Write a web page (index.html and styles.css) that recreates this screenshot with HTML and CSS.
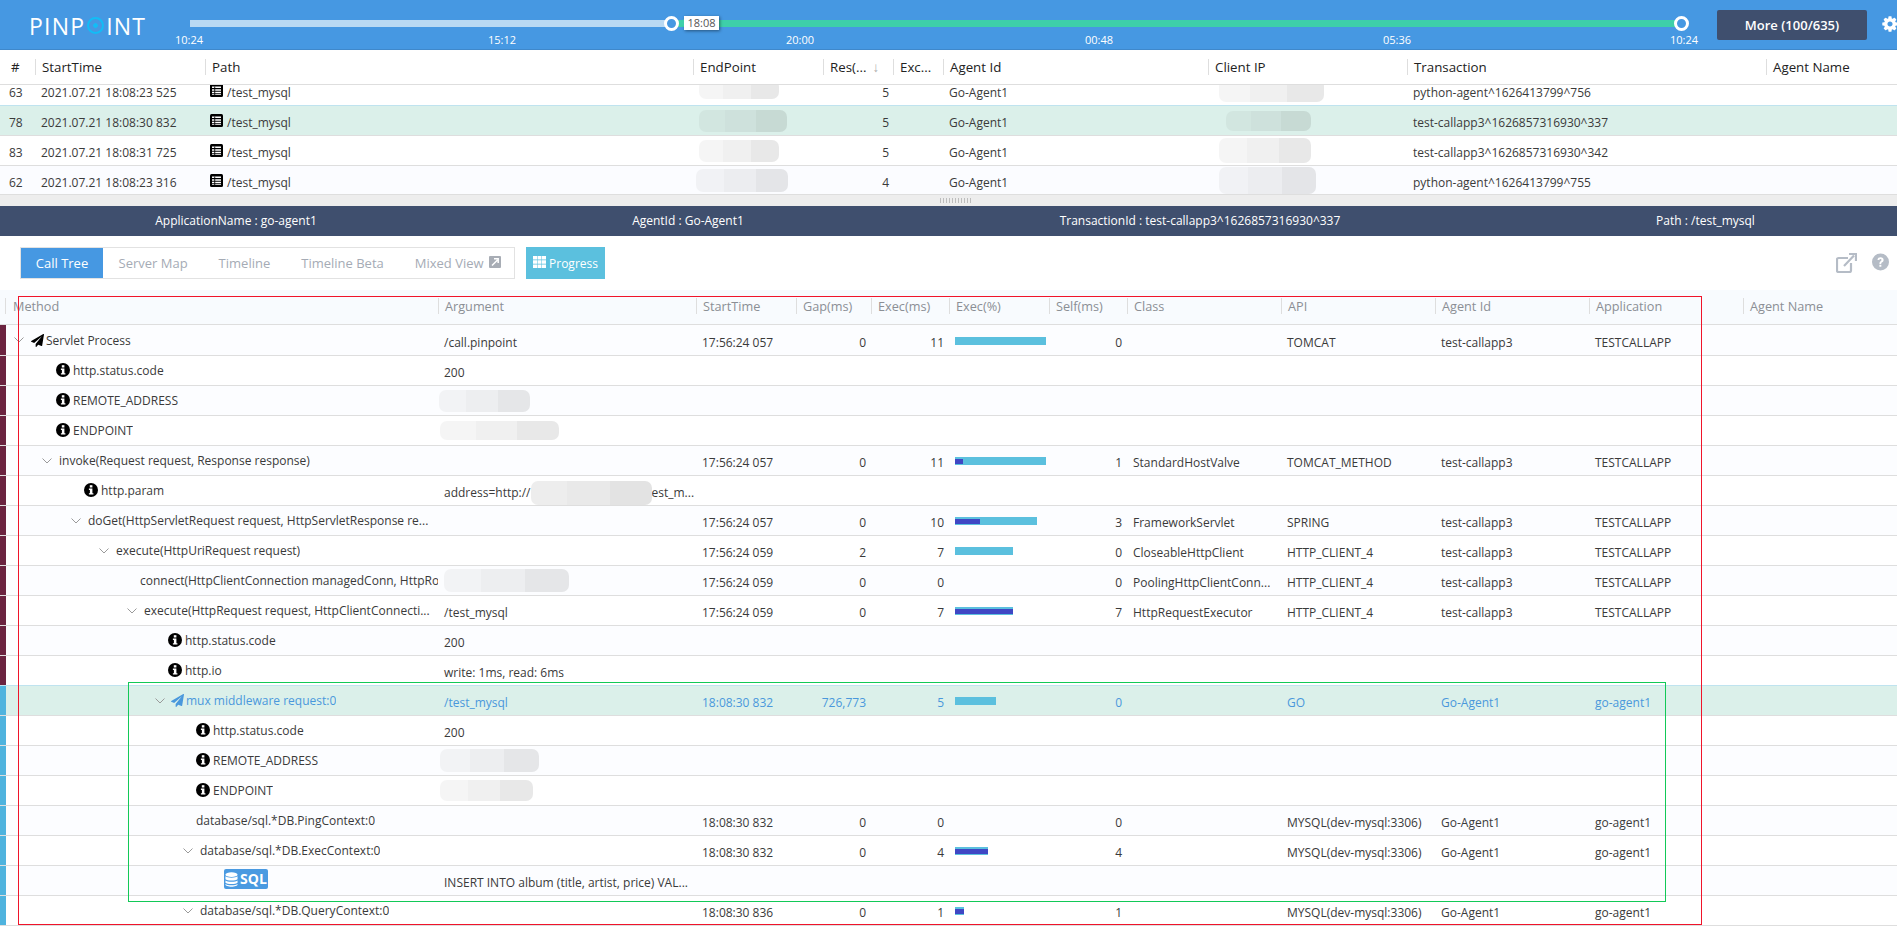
FILE: index.html
```html
<!DOCTYPE html>
<html lang="en">
<head>
<meta charset="utf-8">
<title>Pinpoint transaction list</title>
<link rel="stylesheet" href="styles.css">
</head>
<body>
<svg class="sprite" xmlns="http://www.w3.org/2000/svg">
  <symbol id="i-plane" viewBox="0 0 1792 1792"><path d="M1764 11q33 24 27 64l-256 1536q-5 29-32 45-14 8-31 8-11 0-24-5l-453-185-242 295q-18 23-49 23-13 0-22-4-19-7-30.5-23.5t-11.5-36.5v-349l864-1059-1069 925-395-162q-37-14-40-55-2-40 32-59l1664-960q15-9 32-9 20 0 36 11z"/></symbol>
  <symbol id="i-gear" viewBox="0 0 1792 1792"><path d="M1152 896q0-106-75-181t-181-75-181 75-75 181 75 181 181 75 181-75 75-181zm512-109v222q0 12-8 23t-20 13l-185 28q-19 54-39 91 35 50 107 138 10 12 10 25t-9 23q-27 37-99 108t-94 71q-12 0-26-9l-138-108q-44 23-91 38-16 136-29 186-7 28-36 28h-222q-14 0-24.5-8.5t-11.5-21.5l-28-184q-49-16-90-37l-141 107q-10 9-25 9-14 0-25-11-126-114-165-168-7-10-7-23 0-12 8-23 15-21 51-66.5t54-70.5q-27-50-41-99l-183-27q-13-2-21-12.5t-8-23.5v-222q0-12 8-23t19-13l186-28q14-46 39-92-40-57-107-138-10-12-10-24 0-10 9-23 26-36 98.5-107.5t94.5-71.5q13 0 26 10l138 107q44-23 91-38 16-136 29-186 7-28 36-28h222q14 0 24.5 8.5t11.5 21.5l28 184q49 16 90 37l142-107q9-9 24-9 13 0 25 10 129 119 165 170 7 8 7 22 0 12-8 23-15 21-51 66.5t-54 70.5q26 50 41 98l183 28q13 2 21 12.5t8 23.5z"/></symbol>
  <symbol id="i-info" viewBox="0 0 14 14"><circle cx="7" cy="7" r="7"/><rect x="5.8" y="2.2" width="2.6" height="2.3" fill="#fff"/><path d="M4.9 5.6h3.5v4.6h1v1.4H4.9v-1.4h1V7H4.9z" fill="#fff"/></symbol>
  <symbol id="i-chev" viewBox="0 0 10 6"><path d="M.5.5 5 5 9.500.5" fill="none" stroke="#9a9a9a" stroke-width="1"/></symbol>
  <symbol id="i-list" viewBox="0 0 13 13"><rect width="13" height="13" rx="1.500"/><path d="M2 2.500h9v1.600H2zM2 5.200h9v1.500H2zM2 7.800h9v1.500H2zM2 10.300h9v.7H2z" fill="#fff"/><path d="M4.300 2.500h.9v8.500h-.9z"/></symbol>
  <symbol id="i-grid" viewBox="0 0 13 12"><path d="M0 0h4v3.500H0zM4.500 0h4v3.500h-4zM9 0h4v3.500H9zM0 4.200h4v3.500H0zM4.500 4.200h4v3.500h-4zM9 4.200h4v3.500H9zM0 8.400h4V12H0zM4.500 8.400h4V12h-4zM9 8.400h4V12H9z"/></symbol>
  <symbol id="i-ext" viewBox="0 0 12 12"><rect width="12" height="12" rx="1"/><path d="M3 9.500 8.500 4M5 2.800h4.200V7" fill="none" stroke="#fff" stroke-width="1.500"/></symbol>
  <symbol id="i-share" viewBox="0 0 21 20"><path d="M12 5H2.500A1.500 1.500 0 0 0 1 6.500v11A1.500 1.500 0 0 0 2.500 19h11a1.500 1.500 0 0 0 1.500-1.500V10" fill="none" stroke="currentColor" stroke-width="2.200"/><path d="M8 13 18 2.500M13 1h7v7" fill="none" stroke="currentColor" stroke-width="2.200"/></symbol>
  <symbol id="i-help" viewBox="0 0 18 18"><circle cx="9" cy="9" r="9"/><path d="M5.800 6.800C6 4.800 7.300 4 9.100 4c1.900 0 3.200 1.100 3.200 2.800 0 1.300-.7 1.900-1.500 2.500-.8.500-1 .8-1 1.700H7.900c0-1.500.3-2.100 1.200-2.800.7-.5 1-.8 1-1.300 0-.6-.4-1-1.100-1-.8 0-1.100.4-1.200 1.100zM7.800 12h2.100v2.100H7.800z" fill="#fff"/></symbol>
  <symbol id="i-db" viewBox="0 0 14 16"><ellipse cx="7" cy="2.800" rx="6.500" ry="2.500"/><path d="M.5 4.600C2 6.500 12 6.500 13.500 4.600v3C12 9.500 2 9.500.5 7.600zM.5 9C2 10.900 12 10.900 13.500 9v2.500C12 13.400 2 13.400.5 11.500zM.5 12.800c1.500 1.900 11.500 1.900 13 0v.6c0 1.400-3 2.400-6.500 2.400S.5 14.800.5 13.400z"/></symbol>
</svg>

<header class="topbar">
  <div class="logo">PINP<span class="logo-o"></span>INT</div>
  <div class="timeline">
    <div class="track">
      <div class="track-done"></div>
      <div class="track-live"></div>
      <span class="handle handle-a"></span>
      <span class="handle handle-b"></span>
      <span class="tip">18:08</span>
    </div>
    <div class="ticks">
      <span class="tick">10:24</span><span class="tick">15:12</span><span class="tick">20:00</span><span class="tick">00:48</span><span class="tick">05:36</span><span class="tick">10:24</span>
    </div>
  </div>
  <button class="more">More (100/635)</button>
  <svg class="gear"><use href="#i-gear"/></svg>
</header>

<section class="list">
  <div class="list-row list-head">
    <div class="th first">#</div><div class="th">StartTime</div><div class="th">Path</div><div class="th">EndPoint</div>
    <div class="th">Res(...<span class="sort">↓</span></div><div class="th">Exc...</div><div class="th">Agent Id</div><div class="th">Client IP</div><div class="th">Transaction</div><div class="th">Agent Name</div>
  </div>
  <div class="list-body">
    <div class="list-scroll">
      <div class="list-row">
        <div class="lc idx">63</div><div class="lc">2021.07.21 18:08:23 525</div><div class="lc path"><svg class="ic-list"><use href="#i-list"/></svg>/test_mysql</div><div class="lc"><span class="blob w-80 h-19 up2"></span></div>
        <div class="lc num">5</div><div class="lc"></div><div class="lc">Go-Agent1</div><div class="lc"><span class="blob w-105 h-23 ml-5"></span></div><div class="lc">python-agent^1626413799^756</div><div class="lc"></div>
      </div>
      <div class="list-row sel">
        <div class="lc idx">78</div><div class="lc">2021.07.21 18:08:30 832</div><div class="lc path"><svg class="ic-list"><use href="#i-list"/></svg>/test_mysql</div><div class="lc"><span class="blob w-88 h-22"></span></div>
        <div class="lc num">5</div><div class="lc"></div><div class="lc">Go-Agent1</div><div class="lc"><span class="blob w-85 h-20 ml-12"></span></div><div class="lc">test-callapp3^1626857316930^337</div><div class="lc"></div>
      </div>
      <div class="list-row">
        <div class="lc idx">83</div><div class="lc">2021.07.21 18:08:31 725</div><div class="lc path"><svg class="ic-list"><use href="#i-list"/></svg>/test_mysql</div><div class="lc"><span class="blob w-80 h-22"></span></div>
        <div class="lc num">5</div><div class="lc"></div><div class="lc">Go-Agent1</div><div class="lc"><span class="blob w-92 h-25 ml-5"></span></div><div class="lc">test-callapp3^1626857316930^342</div><div class="lc"></div>
      </div>
      <div class="list-row alt">
        <div class="lc idx">62</div><div class="lc">2021.07.21 18:08:23 316</div><div class="lc path"><svg class="ic-list"><use href="#i-list"/></svg>/test_mysql</div><div class="lc"><span class="blob w-92 h-23 ml-n3"></span></div>
        <div class="lc num">4</div><div class="lc"></div><div class="lc">Go-Agent1</div><div class="lc"><span class="blob w-97 h-27 ml-5"></span></div><div class="lc">python-agent^1626413799^755</div><div class="lc"></div>
      </div>
    </div>
  </div>
</section>

<div class="splitter"><span class="grip"></span></div>

<div class="summary">
  <span>ApplicationName : go-agent1</span><span>AgentId : Go-Agent1</span><span>TransactionId : test-callapp3^1626857316930^337</span><span class="summary-path">Path : /test_mysql</span>
</div>

<div class="toolbar">
  <nav class="tabs">
    <a class="tab active">Call Tree</a><a class="tab">Server Map</a><a class="tab">Timeline</a><a class="tab">Timeline Beta</a><a class="tab">Mixed View<svg class="ic-ext"><use href="#i-ext"/></svg></a>
  </nav>
  <button class="progress"><svg class="ic-grid"><use href="#i-grid"/></svg>Progress</button>
  <div class="tools">
    <svg class="ic-share"><use href="#i-share"/></svg>
    <svg class="ic-help"><use href="#i-help"/></svg>
  </div>
</div>

<section class="tree">
  <div class="tr tree-head">
    <div></div><div class="th method">Method</div><div class="th">Argument</div><div class="th">StartTime</div><div class="th">Gap(ms)</div><div class="th">Exec(ms)</div><div class="th">Exec(%)</div><div class="th">Self(ms)</div><div class="th">Class</div><div class="th">API</div><div class="th">Agent Id</div><div class="th">Application</div><div class="th">Agent Name</div>
  </div>

  <div class="tr tall server">
    <i class="strip"></i><div class="m d0"><svg class="chev"><use href="#i-chev"/></svg><svg class="plane"><use href="#i-plane"/></svg><span class="mt">Servlet Process</span></div>
    <div class="td">/call.pinpoint</div><div class="td">17:56:24 057</div><div class="td num">0</div><div class="td num">11</div>
    <div class="td bar-cell"><div class="bar" style="width:91px"></div></div><div class="td num">0</div><div class="td"></div><div class="td">TOMCAT</div><div class="td">test-callapp3</div><div class="td">TESTCALLAPP</div><div></div>
  </div>
  <div class="tr server">
    <i class="strip"></i><div class="m a1"><svg class="info"><use href="#i-info"/></svg><span class="mt">http.status.code</span></div>
    <div class="td">200</div><div class="rest"></div>
  </div>
  <div class="tr server">
    <i class="strip"></i><div class="m a1"><svg class="info"><use href="#i-info"/></svg><span class="mt">REMOTE_ADDRESS</span></div>
    <div class="td"><span class="blob w-91 h-22 ml-n5"></span></div><div class="rest"></div>
  </div>
  <div class="tr server">
    <i class="strip"></i><div class="m a1"><svg class="info"><use href="#i-info"/></svg><span class="mt">ENDPOINT</span></div>
    <div class="td"><span class="blob w-119 h-19 ml-n4"></span></div><div class="rest"></div>
  </div>
  <div class="tr server">
    <i class="strip"></i><div class="m d1"><svg class="chev"><use href="#i-chev"/></svg><span class="mt">invoke(Request request, Response response)</span></div>
    <div class="td"></div><div class="td">17:56:24 057</div><div class="td num">0</div><div class="td num">11</div>
    <div class="td bar-cell"><div class="bar" style="width:91px"><div class="self" style="width:8px"></div></div></div><div class="td num">1</div><div class="td">StandardHostValve</div><div class="td">TOMCAT_METHOD</div><div class="td">test-callapp3</div><div class="td">TESTCALLAPP</div><div></div>
  </div>
  <div class="tr server">
    <i class="strip"></i><div class="m a3"><svg class="info"><use href="#i-info"/></svg><span class="mt">http.param</span></div>
    <div class="td"><span>address=http://</span><span class="blob inline-blob"></span><span>est_m...</span></div><div class="rest"></div>
  </div>
  <div class="tr server">
    <i class="strip"></i><div class="m d2"><svg class="chev"><use href="#i-chev"/></svg><span class="mt">doGet(HttpServletRequest request, HttpServletResponse re...</span></div>
    <div class="td"></div><div class="td">17:56:24 057</div><div class="td num">0</div><div class="td num">10</div>
    <div class="td bar-cell"><div class="bar" style="width:82px"><div class="self" style="width:25px"></div></div></div><div class="td num">3</div><div class="td">FrameworkServlet</div><div class="td">SPRING</div><div class="td">test-callapp3</div><div class="td">TESTCALLAPP</div><div></div>
  </div>
  <div class="tr server">
    <i class="strip"></i><div class="m d3"><svg class="chev"><use href="#i-chev"/></svg><span class="mt">execute(HttpUriRequest request)</span></div>
    <div class="td"></div><div class="td">17:56:24 059</div><div class="td num">2</div><div class="td num">7</div>
    <div class="td bar-cell"><div class="bar" style="width:58px"></div></div><div class="td num">0</div><div class="td">CloseableHttpClient</div><div class="td">HTTP_CLIENT_4</div><div class="td">test-callapp3</div><div class="td">TESTCALLAPP</div><div></div>
  </div>
  <div class="tr server">
    <i class="strip"></i><div class="m leaf4"><span class="mt clip">connect(HttpClientConnection managedConn, HttpRo</span></div>
    <div class="td"><span class="blob w-125 h-23"></span></div><div class="td">17:56:24 059</div><div class="td num">0</div><div class="td num">0</div>
    <div class="td bar-cell"></div><div class="td num">0</div><div class="td"><span class="ell">PoolingHttpClientConn...</span></div><div class="td">HTTP_CLIENT_4</div><div class="td">test-callapp3</div><div class="td">TESTCALLAPP</div><div></div>
  </div>
  <div class="tr server">
    <i class="strip"></i><div class="m d4"><svg class="chev"><use href="#i-chev"/></svg><span class="mt">execute(HttpRequest request, HttpClientConnecti...</span></div>
    <div class="td">/test_mysql</div><div class="td">17:56:24 059</div><div class="td num">0</div><div class="td num">7</div>
    <div class="td bar-cell"><div class="bar" style="width:58px"><div class="self" style="width:58px"></div></div></div><div class="td num">7</div><div class="td">HttpRequestExecutor</div><div class="td">HTTP_CLIENT_4</div><div class="td">test-callapp3</div><div class="td">TESTCALLAPP</div><div></div>
  </div>
  <div class="tr server">
    <i class="strip"></i><div class="m a5"><svg class="info"><use href="#i-info"/></svg><span class="mt">http.status.code</span></div>
    <div class="td">200</div><div class="rest"></div>
  </div>
  <div class="tr server">
    <i class="strip"></i><div class="m a5"><svg class="info"><use href="#i-info"/></svg><span class="mt">http.io</span></div>
    <div class="td">write: 1ms, read: 6ms</div><div class="rest"></div>
  </div>

  <div class="tr agent sel">
    <i class="strip"></i><div class="m d5"><svg class="chev"><use href="#i-chev"/></svg><svg class="plane"><use href="#i-plane"/></svg><span class="mt">mux middleware request:0</span></div>
    <div class="td">/test_mysql</div><div class="td">18:08:30 832</div><div class="td num">726,773</div><div class="td num">5</div>
    <div class="td bar-cell"><div class="bar" style="width:41px"></div></div><div class="td num">0</div><div class="td"></div><div class="td">GO</div><div class="td">Go-Agent1</div><div class="td">go-agent1</div><div></div>
  </div>
  <div class="tr agent">
    <i class="strip"></i><div class="m a6"><svg class="info"><use href="#i-info"/></svg><span class="mt">http.status.code</span></div>
    <div class="td">200</div><div class="rest"></div>
  </div>
  <div class="tr agent">
    <i class="strip"></i><div class="m a6"><svg class="info"><use href="#i-info"/></svg><span class="mt">REMOTE_ADDRESS</span></div>
    <div class="td"><span class="blob w-99 h-23 ml-n4"></span></div><div class="rest"></div>
  </div>
  <div class="tr agent">
    <i class="strip"></i><div class="m a6"><svg class="info"><use href="#i-info"/></svg><span class="mt">ENDPOINT</span></div>
    <div class="td"><span class="blob w-93 h-21 ml-n4"></span></div><div class="rest"></div>
  </div>
  <div class="tr agent">
    <i class="strip"></i><div class="m leaf6"><span class="mt">database/sql.*DB.PingContext:0</span></div>
    <div class="td"></div><div class="td">18:08:30 832</div><div class="td num">0</div><div class="td num">0</div>
    <div class="td bar-cell"></div><div class="td num">0</div><div class="td"></div><div class="td">MYSQL(dev-mysql:3306)</div><div class="td">Go-Agent1</div><div class="td">go-agent1</div><div></div>
  </div>
  <div class="tr agent">
    <i class="strip"></i><div class="m d6"><svg class="chev"><use href="#i-chev"/></svg><span class="mt">database/sql.*DB.ExecContext:0</span></div>
    <div class="td"></div><div class="td">18:08:30 832</div><div class="td num">0</div><div class="td num">4</div>
    <div class="td bar-cell"><div class="bar" style="width:33px"><div class="self" style="width:33px"></div></div></div><div class="td num">4</div><div class="td"></div><div class="td">MYSQL(dev-mysql:3306)</div><div class="td">Go-Agent1</div><div class="td">go-agent1</div><div></div>
  </div>
  <div class="tr agent">
    <i class="strip"></i><div class="m a8"><span class="sql"><svg class="ic-db"><use href="#i-db"/></svg>SQL</span></div>
    <div class="td">INSERT INTO album (title, artist, price) VAL...</div><div class="rest"></div>
  </div>
  <div class="tr agent">
    <i class="strip"></i><div class="m d6"><svg class="chev"><use href="#i-chev"/></svg><span class="mt">database/sql.*DB.QueryContext:0</span></div>
    <div class="td"></div><div class="td">18:08:30 836</div><div class="td num">0</div><div class="td num">1</div>
    <div class="td bar-cell"><div class="bar" style="width:9px"><div class="self" style="width:9px"></div></div></div><div class="td num">1</div><div class="td"></div><div class="td">MYSQL(dev-mysql:3306)</div><div class="td">Go-Agent1</div><div class="td">go-agent1</div><div></div>
  </div>
</section>

<div class="mark mark-red"></div>
<div class="mark mark-green"></div>
</body>
</html>
```
FILE: styles.css
```css
* { box-sizing: border-box; }
html, body { margin: 0; height: 929px; overflow: hidden; }
body {
  position: relative;
  font-family: "Open Sans", "Noto Sans", sans-serif;
  font-size: 12px;
  color: #3a3a3a;
  background: #fff;
}
.sprite { display: none; }

/* top bar */
.topbar {
  height: 50px;
  display: flex;
  background: #4698e2;
  border-bottom: 1px solid #3f88cb;
  overflow: hidden;
}
.logo {
  width: 190px;
  padding: 11px 0 0 29px;
  flex: none;
  font-size: 23px;
  line-height: 26px;
  font-weight: 400;
  letter-spacing: 1.2px;
  color: #fff;
  display: flex;
  height: 40px;
  align-items: center;
}
.logo-o {
  width: 17px;
  height: 17px;
  margin: 0 2px 0 2px;
  border: 2px solid #12bdf6;
  border-radius: 50%;
  background: radial-gradient(circle, #12bdf6 0 2px, transparent 2.500px);
  flex: none;
}
.timeline { width: 1527px; flex: none; }
.track {
  position: relative;
  display: flex;
  width: 1492px;
  height: 7px;
  margin-top: 20px;
}
.track-done { width: 481px; background: #b9d9f3; }
.track-live { flex: 1; background: #3ecfa9; }
.handle {
  position: absolute;
  top: -4px;
  width: 15px;
  height: 15px;
  border: 3px solid #fff;
  border-radius: 50%;
  background: #4698e2;
}
.handle-a { left: 474px; }
.handle-b { left: 1484px; }
.tip {
  position: absolute;
  left: 494px;
  top: -4px;
  width: 35px;
  height: 14px;
  background: #fff;
  color: #555;
  font-size: 11px;
  line-height: 14px;
  text-align: center;
  box-shadow: 1px 1px 3px rgba(0, 0, 0, .45);
}
.tip::before {
  content: "";
  position: absolute;
  left: -4px;
  top: 3px;
  border: 4px solid transparent;
  border-left: 0;
  border-right-color: #3ecfa9;
}
.ticks {
  display: grid;
  grid-template-columns: 313px 298px 299px 298px 287px 40px;
  margin: 6px 0 0 -21px;
}
.tick {
  width: 40px;
  color: #fff;
  font-size: 11px;
  line-height: 13px;
  text-align: center;
}
.more {
  flex: none;
  width: 150px;
  height: 30px;
  margin: 10px 0 0 0;
  border: 0;
  border-radius: 2px;
  background: #3f4f6e;
  color: #fff;
  font: 600 13px "Open Sans", sans-serif;
}
.gear { flex: none; width: 18px; height: 18px; margin: 15px 0 0 14px; fill: #fff; }

/* transaction list */
.list-row {
  display: grid;
  grid-template-columns: 35px 170px 488px 130px 70px 50px 265px 199px 359px 131px;
  height: 30px;
  border-bottom: 1px solid #dedede;
  align-items: center;
  background: #fff;
}
.list-head { height: 35px; }
.list-head .th { color: #222; font-size: 13.300px; }
.th {
  height: 16px;
  padding-left: 6px;
  border-left: 1px solid #dedede;
  font-size: 13px;
  line-height: 16px;
  white-space: nowrap;
  overflow: hidden;
}
.th.first { padding-left: 11px; border-left: 0; }
.sort { margin-left: 6px; color: #aaa; }
.list-body { height: 110px; overflow: hidden; border-bottom: 1px solid #dedede; }
.list-scroll { margin-top: -9px; }
.lc {
  height: 29px;
  padding: 4px 0 0 6px;
  display: flex;
  align-items: center;
  white-space: nowrap;
  min-width: 0;
}
.idx { padding-left: 9px; }
.lc.path { padding-left: 5px; }
.lc.num { justify-content: flex-end; padding-right: 4px; }
.list-row.alt { background: #fbfcff; }
.list-row.sel { background: #dbf0ea; box-shadow: 0 -1px 0 #bfe3ef; }
.ic-list { width: 13px; height: 13px; margin: -4px 4px 0 0; flex: none; }

/* redaction blobs */
.blob {
  display: block;
  flex: none;
  margin-top: -4px;
  border-radius: 7px;
  background: linear-gradient(90deg, rgba(0,0,0,.04) 0 30%, rgba(0,0,0,.06) 30% 65%, rgba(0,0,0,.09) 65% 100%);
  filter: blur(.6px);
}
.inline-blob {
  width: 121px;
  height: 24px;
  margin-top: 0;
  background: linear-gradient(90deg, #ededed 0 30%, #e9e9e9 30% 65%, #e3e3e3 65% 100%);
}
.w-80 { width: 80px; } .w-85 { width: 85px; } .w-88 { width: 88px; } .w-91 { width: 91px; }
.w-92 { width: 92px; } .w-93 { width: 93px; } .w-97 { width: 97px; } .w-99 { width: 99px; }
.w-105 { width: 105px; } .w-119 { width: 119px; } .w-125 { width: 125px; }
.h-19 { height: 19px; } .h-20 { height: 20px; } .h-21 { height: 21px; } .h-22 { height: 22px; }
.h-23 { height: 23px; } .h-25 { height: 25px; } .h-27 { height: 27px; }
.ml-5 { margin-left: 5px; } .ml-12 { margin-left: 12px; } .ml-n3 { margin-left: -3px; }
.ml-n4 { margin-left: -4px; } .ml-n5 { margin-left: -5px; } .up2 { margin-top: -6px; }

/* splitter + summary */
.splitter {
  height: 11px;
  background: #ededed;
  display: flex;
  justify-content: center;
  padding: 3px 0 0 14px;
}
.grip {
  width: 31px;
  height: 5px;
  background: repeating-linear-gradient(90deg, #bdbdbd 0 1px, transparent 1px 3px);
}
.summary {
  height: 30px;
  display: grid;
  grid-template-columns: 472px 432px 592px 401px;
  background: #3f4f6e;
  color: #fff;
  line-height: 30px;
  text-align: center;
}
.summary-path { padding-left: 18px; }

/* toolbar */
.toolbar {
  height: 54px;
  padding: 11px 8px 0 20px;
  display: flex;
  align-items: flex-start;
}
.tabs {
  display: flex;
  flex: none;
  height: 32px;
  width: 495px;
  border: 1px solid #e2e2e2;
  background: #fff;
  font-size: 13px;
  line-height: 30px;
}
.tab { flex: none; padding: 0 15.500px; color: #a5abb5; white-space: nowrap; display: flex; align-items: center; }
.tab.active { width: 82px; padding: 0; justify-content: center; background: #4698e2; color: #fff; font-weight: 500; }
.ic-ext { width: 12px; height: 12px; margin: -2px 0 0 5px; fill: #a8adb5; }
.progress {
  flex: none;
  width: 79px;
  height: 32px;
  margin-left: 11px;
  border: 0;
  padding: 0;
  background: #5bc0de;
  color: #fff;
  font: 12px "Open Sans", sans-serif;
  display: flex;
  align-items: center;
  justify-content: center;
}
.ic-grid { width: 13px; height: 12px; margin: -3px 3px 0 0; fill: #fff; }
.tools {
  margin-left: auto;
  display: flex;
  gap: 15px;
  padding: 6px 0 0;
  color: #b5bcc6;
}
.ic-share { width: 21px; height: 20px; }
.ic-help { width: 17px; height: 18px; fill: #b5bcc6; }

/* call tree */
.tr {
  display: grid;
  grid-template-columns: 6px 432px 258px 100px 75px 78px 100px 78px 154px 154px 154px 154px 154px;
  height: 30px;
  border-bottom: 1px solid #dedede;
  background: #fff;
  align-items: center;
}
.tr:nth-child(even) { background: #fcfdff; }
.tr.tall { height: 31px; }
.tree-head {
  height: 35px;
  background: #f8fbfe !important;
  padding-bottom: 2px;
}
.tree-head .th { color: #8b8f95; padding-left: 6px; font-size: 12.700px; }
.tree-head .method { margin-left: -1px; padding-left: 7px; }
.strip { height: 29px; align-self: start; display: block; }
.server .strip { background: #6b2340; }
.agent .strip { background: #4fb3de; }
.tall .strip { height: 30px; }
.m {
  display: flex;
  align-items: center;
  min-width: 0;
  height: 29px;
  padding-right: 8px;
  white-space: nowrap;
}
.mt { overflow: hidden; text-overflow: ellipsis; min-width: 0; }
.mt.clip { text-overflow: clip; }
.leaf4 { padding-right: 0; }
.d0 { padding-left: 8px; }
.d1 { padding-left: 36px; }
.d2 { padding-left: 65px; }
.d3 { padding-left: 93px; }
.d4 { padding-left: 121px; }
.d5 { padding-left: 149px; }
.d6 { padding-left: 177px; }
.a1 { padding-left: 50px; }
.a3 { padding-left: 78px; }
.a5 { padding-left: 162px; }
.a6 { padding-left: 190px; }
.a8 { padding-left: 218px; }
.leaf4 { padding-left: 134px; }
.leaf6 { padding-left: 190px; }
.chev { width: 10px; height: 6px; margin-right: 7px; flex: none; }
.plane { width: 13px; height: 13px; margin: 0 2px 0 0; flex: none; }
.d5 .plane { margin-left: -1px; }
.info { width: 14px; height: 14px; margin: -2px 3px 0 0; flex: none; }
.td {
  height: 29px;
  padding: 4px 0 0 6px;
  display: flex;
  align-items: center;
  white-space: nowrap;
  min-width: 0;
}
.td.num { justify-content: flex-end; padding: 4px 5px 0 0; }
.ell { overflow: hidden; text-overflow: ellipsis; }
.td.bar-cell { padding: 11px 0 0 6px; align-items: flex-start; }
.bar { height: 8px; padding-top: 2px; background: #5bc0de; }
.self { height: 5px; background: #3f47c4; }
.rest { grid-column: 4 / -1; }
.sql {
  width: 44px;
  height: 20px;
  margin-top: -3px;
  border-radius: 2px;
  background: #4a9ae1;
  color: #fff;
  font-size: 14px;
  font-weight: 700;
  line-height: 20px;
  display: flex;
  align-items: center;
  justify-content: center;
  gap: 2px;
}
.ic-db { width: 13px; height: 15px; fill: #fff; }
.tr.sel { background: #dbf0ea; box-shadow: 0 -1px 0 #bfe3ef; }
.tr.sel .m, .tr.sel .td { color: #4a98dc; }
.tr.sel .plane { fill: #4a98dc; }

/* annotation rectangles drawn on the screenshot */
.mark { position: absolute; pointer-events: none; }
.mark-red { left: 18px; top: 296px; width: 1684px; height: 629px; border: 1px solid #f0142a; }
.mark-green { left: 128px; top: 682px; width: 1538px; height: 220px; border: 1px solid #12c957; }
```
